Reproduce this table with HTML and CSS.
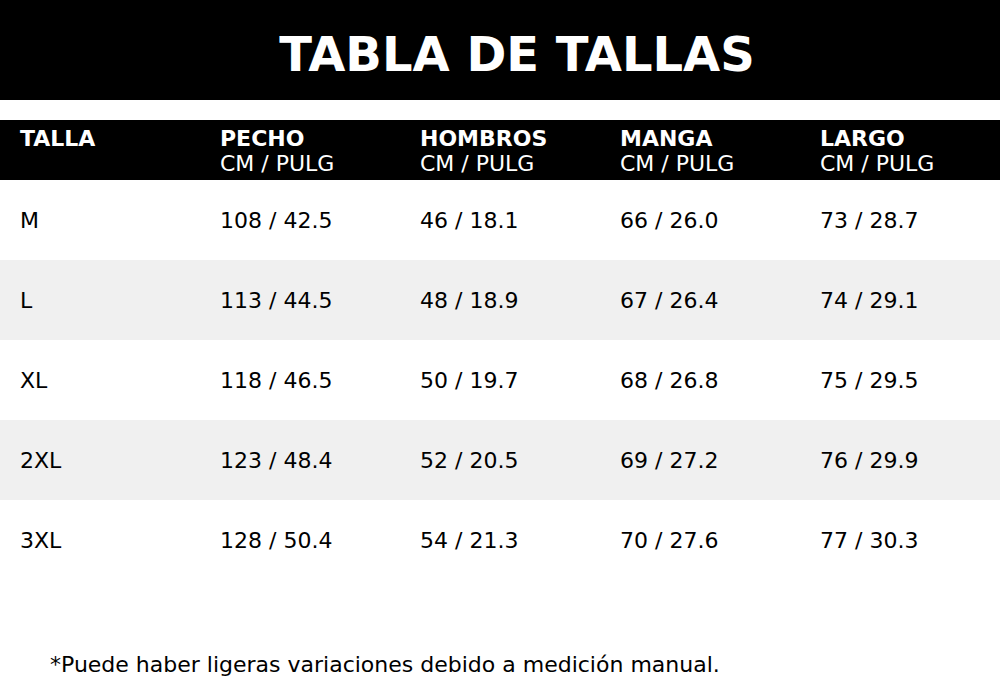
FILE: index.html
```html
<!DOCTYPE html>
<html lang="es">
<head>
<meta charset="utf-8">
<title>Tabla de tallas</title>
<link rel="stylesheet" href="styles.css">
</head>
<body>
<header class="banner"><h1 class="title">TABLA DE TALLAS</h1></header>
<div class="table">
  <div class="row head">
    <div class="cell"><b>TALLA</b></div>
    <div class="cell"><b>PECHO</b><span>CM / PULG</span></div>
    <div class="cell"><b>HOMBROS</b><span>CM / PULG</span></div>
    <div class="cell"><b>MANGA</b><span>CM / PULG</span></div>
    <div class="cell"><b>LARGO</b><span>CM / PULG</span></div>
  </div>
  <div class="row"><div class="cell">M</div><div class="cell">108 / 42.5</div><div class="cell">46 / 18.1</div><div class="cell">66 / 26.0</div><div class="cell">73 / 28.7</div></div>
  <div class="row alt"><div class="cell">L</div><div class="cell">113 / 44.5</div><div class="cell">48 / 18.9</div><div class="cell">67 / 26.4</div><div class="cell">74 / 29.1</div></div>
  <div class="row"><div class="cell">XL</div><div class="cell">118 / 46.5</div><div class="cell">50 / 19.7</div><div class="cell">68 / 26.8</div><div class="cell">75 / 29.5</div></div>
  <div class="row alt"><div class="cell">2XL</div><div class="cell">123 / 48.4</div><div class="cell">52 / 20.5</div><div class="cell">69 / 27.2</div><div class="cell">76 / 29.9</div></div>
  <div class="row"><div class="cell">3XL</div><div class="cell">128 / 50.4</div><div class="cell">54 / 21.3</div><div class="cell">70 / 27.6</div><div class="cell">77 / 30.3</div></div>
</div>
<p class="note">*Puede haber ligeras variaciones debido a medición manual.</p>
</body>
</html>
```
FILE: styles.css
```css
html, body {
  margin: 0;
  padding: 0;
  background: #fff;
  font-family: "DejaVu Sans", sans-serif;
  color: #000;
}
.banner {
  background: #000;
  height: 100px;
  box-sizing: border-box;
  padding: 8px 0 0 34px;
  display: flex;
  align-items: center;
  justify-content: center;
}
.title {
  margin: 0;
  color: #fff;
  font-size: 48px;
  font-weight: bold;
  line-height: 1;
}
.table {
  margin-top: 20px;
}
.row {
  display: grid;
  grid-template-columns: repeat(5, 200px);
  height: 80px;
  align-items: center;
  font-size: 22px;
}
.row.alt {
  background: #f0f0f0;
}
.row.head {
  background: #000;
  color: #fff;
  height: 60px;
  align-items: start;
  padding-top: 6px;
  box-sizing: border-box;
  line-height: 25px;
}
.cell {
  padding-left: 20px;
}
.head .cell b, .head .cell span {
  display: block;
}
.note {
  margin: 72px 0 0 50px;
  font-size: 22px;
}
```
